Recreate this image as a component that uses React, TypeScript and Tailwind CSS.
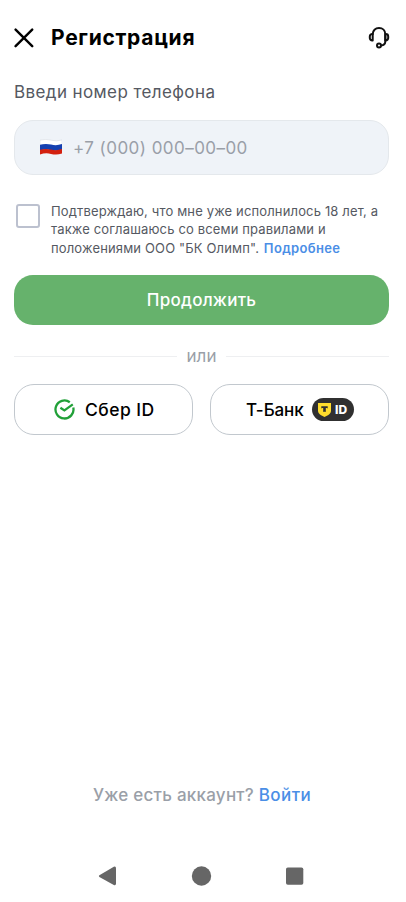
import React from 'react';

function CloseIcon() {
  return (
    <svg width="20" height="20" viewBox="0 0 20 20" fill="none" stroke="#000" strokeWidth="2.4" strokeLinecap="round">
      <path d="M1.6 1.6 18.2 18.2M18.2 1.6 1.6 18.2" />
    </svg>
  );
}

function HeadsetIcon() {
  return (
    <svg width="22" height="22" viewBox="0 0 22 22" fill="none" stroke="#111" strokeWidth="2" strokeLinecap="round" strokeLinejoin="round">
      <path d="M4.700 7.200C4.700 3.400 7.400 1 11 1s6.300 2.400 6.300 6.200v7.300c0 2.400-1.500 3.700-4.200 3.900" />
      <path d="M4.700 7v6.500H4.200A2.400 2.400 0 0 1 1.800 11.100V9.400A2.400 2.400 0 0 1 4.200 7Z" />
      <path d="M17.300 7h.5a2.400 2.400 0 0 1 2.400 2.400v1.700a2.400 2.400 0 0 1-2.400 2.400h-.5Z" />
      <circle cx="11" cy="18.400" r="2" />
    </svg>
  );
}

function RussianFlag() {
  return (
    <svg width="22" height="17" viewBox="0 0 22 17">
      <path d="M0 1.2Q5.500-.4 11 1.200T22 .9V6Q16.500 8 11 6.400T0 6.500Z" fill="#fff" stroke="#d5d9de" strokeWidth=".5" />
      <path d="M0 5.800Q5.500 4.200 11 5.600T22 5.100V10.800Q16.500 12.600 11 11.200T0 11.600Z" fill="#1540b0" />
      <path d="M0 10.800Q5.500 9.200 11 10.600T22 10.100V14.600Q16.500 16.300 11 14.900T0 15.500Z" fill="#d3200f" />
    </svg>
  );
}

function SberIcon() {
  return (
    <svg width="21" height="21" viewBox="0 0 21 21" fill="none" stroke="#21a038" strokeWidth="2.3">
      <path d="M15.800 3.200A9 9 0 1 0 19.300 8.600" />
      <path d="m6.400 8.800 4 2.600 8.400-6" />
    </svg>
  );
}

function TBankBadge() {
  return (
    <span className="flex h-[23px] w-[42px] items-center rounded-full bg-[#303030] pl-[6px]">
      <svg width="13" height="15" viewBox="0 0 13 15">
        <path d="M0 1h13v7.500c0 2-1 3.400-2.600 4.400L6.500 15l-3.900-2.100C1 11.900 0 10.500 0 8.500Z" fill="#ffdd2d" />
        <path d="M3.300 4.300h6.400v2.300C9.300 6.100 8.500 6 7.800 6v2.900c0 .5.300.9.800.9H4.400c.5 0 .8-.4.800-.9V6c-.7 0-1.500.1-1.900.6Z" fill="#303030" />
      </svg>
      <span className="ml-[4px] text-[12px] leading-none font-extrabold text-white">ID</span>
    </span>
  );
}

function NavBar() {
  return (
    <nav className="mt-[59px] flex h-[20px] items-center pl-[98px]">
      <svg width="206" height="20" viewBox="0 0 206 20" fill="#666">
        <path d="M1.400 9.300 15.800.8Q18 0 18 2.200V17.600Q18 19.800 15.800 19L1.400 10.900Q.2 10.100 1.400 9.300Z" />
        <circle cx="103.500" cy="10" r="9.700" />
        <rect x="188" y="1.500" width="17.300" height="17.300" rx="1.800" />
      </svg>
    </nav>
  );
}

export default function App() {
  return (
    <div className="flex h-[902px] w-[406px] flex-col overflow-hidden bg-white font-['Inter','Noto_Sans',sans-serif] whitespace-nowrap">
      <header className="mt-[26px] flex h-[24px] items-center pr-[16px] pl-[14px]">
        <button aria-label="Закрыть">
          <CloseIcon />
        </button>
        <h1 className="ml-[17px] text-[21px] font-bold tracking-[0.7px] text-black">Регистрация</h1>
        <button className="ml-auto" aria-label="Поддержка">
          <HeadsetIcon />
        </button>
      </header>

      <main className="mt-[30px] flex w-[389px] flex-col pl-[14px]">
        <label className="h-[24px] text-[17px] leading-[24px] tracking-[0.4px] text-[#555962]">
          Введи номер телефона
        </label>
        <div className="mt-[16px] flex h-[55px] items-center rounded-[19px] border-[1.5px] border-[#e4e8ec] bg-[#eff3f8] pl-[25px]">
          <RussianFlag />
          <span className="ml-[11px] pt-[2px] text-[17px] tracking-[0.45px] text-[#9a9fa8]">+7 (000) 000–00–00</span>
        </div>

        <div className="mt-[27px] flex h-[55px]">
          <span className="mt-[2px] ml-[2px] h-[24px] w-[24px] shrink-0 rounded-[3px] border-2 border-[#bcc1cf]" />
          <p className="ml-[11px] text-[13px] leading-[18.3px] tracking-[0.15px] text-[#555962]">
            Подтверждаю, что мне уже исполнилось 18 лет, а
            <br />
            также соглашаюсь со всеми правилами и
            <br />
            положениями ООО "БК Олимп".{' '}
            <a className="ml-px font-semibold tracking-[0.35px] text-[#4a8ee6]">Подробнее</a>
          </p>
        </div>

        <button className="mt-[18px] h-[50px] rounded-[19px] bg-[#66b26c] pt-px text-[17px] font-medium tracking-[0.25px] text-white">
          Продолжить
        </button>

        <div className="mt-[19px] flex h-[24px] items-center">
          <span className="h-px w-[163px] bg-[#eeeff1]" />
          <span className="flex-1 pt-px text-center text-[17px] text-[#9a9fa8]">или</span>
          <span className="h-px w-[163px] bg-[#eeeff1]" />
        </div>

        <div className="mt-[16px] grid grid-cols-2 gap-[17px]">
          <button className="flex h-[51px] items-center rounded-[20px] border-[1.5px] border-[#c2c8ce] pl-[39px] text-[17px] font-medium text-black">
            <SberIcon />
            <span className="ml-[10px] pt-[2px] text-[17.5px] tracking-[0.45px]">Сбер ID</span>
          </button>
          <button className="flex h-[51px] items-center rounded-[20px] border-[1.5px] border-[#c2c8ce] pl-[35px] text-[17px] font-medium text-black">
            <span className="w-[66px] pt-[2px] text-left tracking-[-0.1px]">Т-Банк</span>
            <TBankBadge />
          </button>
        </div>
      </main>

      <p className="mt-auto pl-[93px] text-[17px] leading-[24px] font-medium tracking-[0.25px] text-[#9a9fa8]">
        Уже есть аккаунт? <a className="tracking-[0.4px] text-[#4a8ee6]">Войти</a>
      </p>
      <NavBar />
      <div className="h-[16px]" />
    </div>
  );
}
